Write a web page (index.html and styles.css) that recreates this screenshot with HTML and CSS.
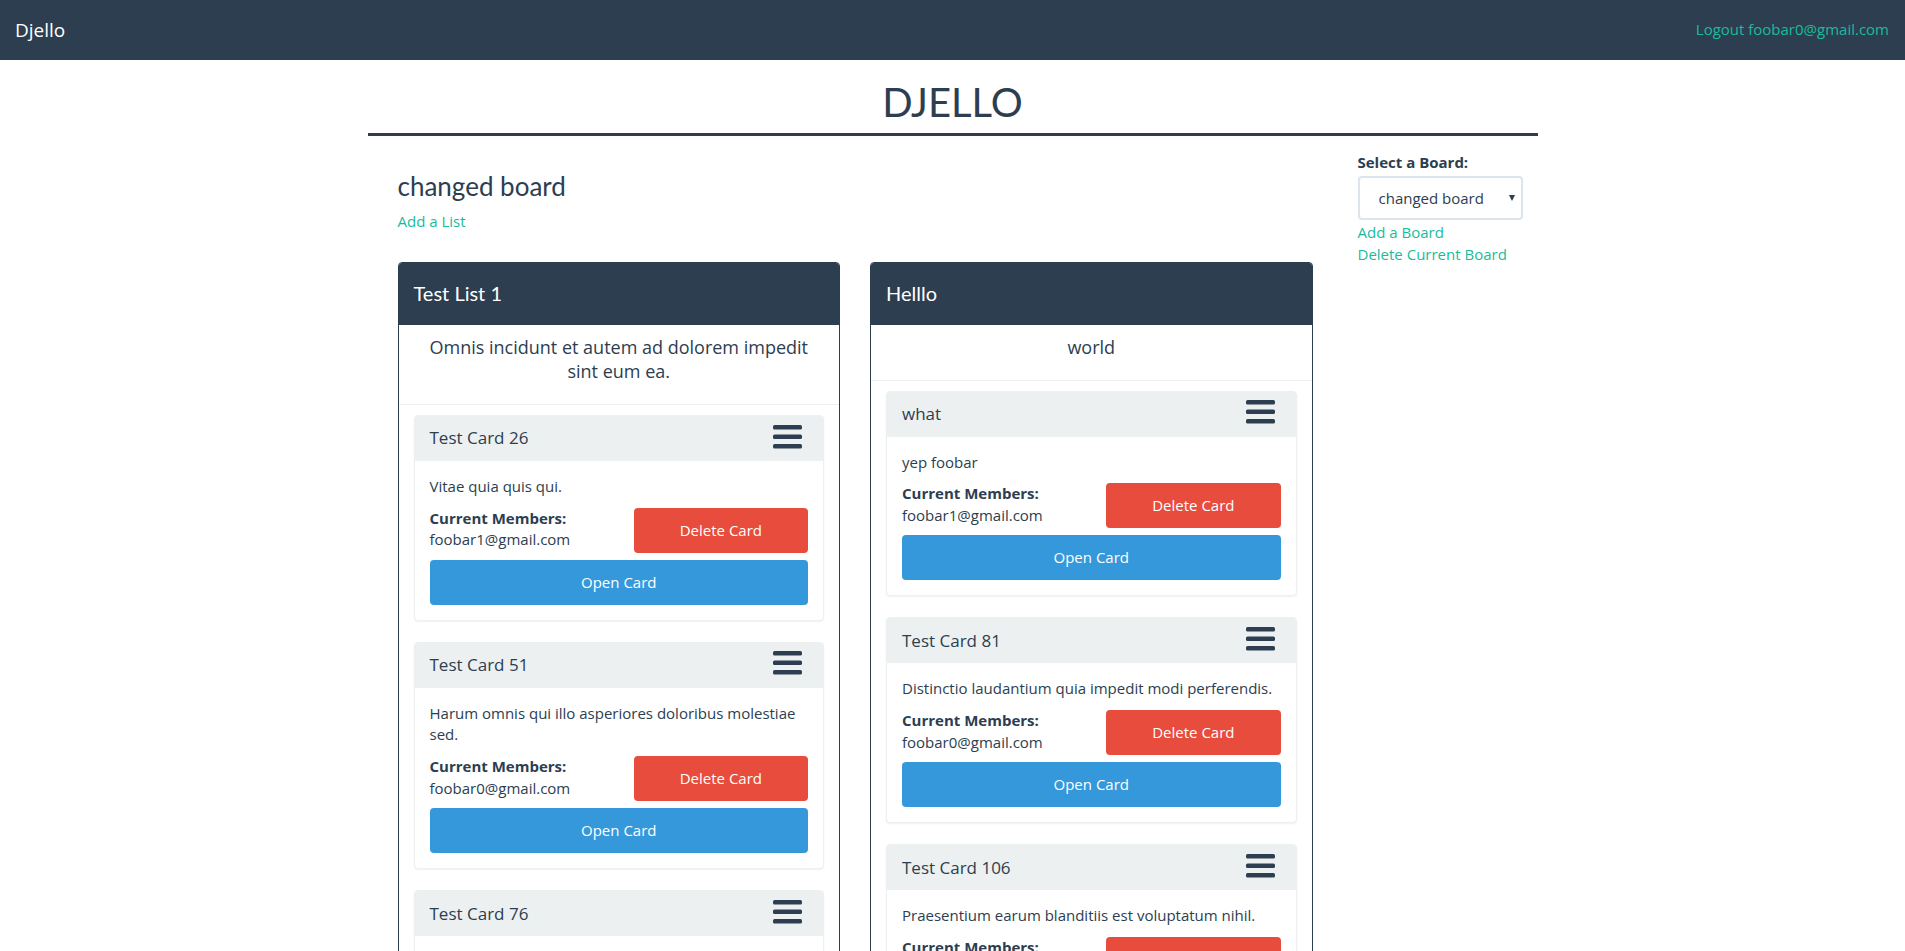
FILE: index.html
```html
<!DOCTYPE html>
<html lang="en">
<head>
<meta charset="utf-8">
<title>Djello</title>
<link rel="stylesheet" href="styles.css">
</head>
<body>
<nav class="navbar">
  <a class="brand" href="#">Djello</a>
  <a class="logout" href="#">Logout foobar0@gmail.com</a>
</nav>

<div class="container">
  <h1 class="site-title">DJELLO</h1>
  <div class="layout">
    <main class="board">
      <h3 class="board-title">changed board</h3>
      <p class="board-actions"><a href="#">Add a List</a></p>

      <div class="lists">
        <section class="list">
          <header class="list-head"><h4>Test List 1</h4></header>
          <div class="list-desc"><p>Omnis incidunt et autem ad dolorem impedit sint eum ea.</p></div>
          <div class="list-body">
            <article class="card">
              <div class="card-head"><span class="card-title">Test Card 26</span><svg class="bars" viewBox="0 0 29 24" width="29" height="24"><rect x="0" y="0" width="29" height="4.5" rx="1.6"/><rect x="0" y="9.5" width="29" height="4.5" rx="1.6"/><rect x="0" y="19" width="29" height="4.5" rx="1.6"/></svg></div>
              <div class="card-body">
                <p>Vitae quia quis qui.</p>
                <div class="card-row">
                  <div class="members"><strong>Current Members:</strong><br>foobar1@gmail.com</div>
                  <button class="btn btn-danger">Delete Card</button>
                </div>
                <button class="btn btn-info btn-block">Open Card</button>
              </div>
            </article>
            <article class="card">
              <div class="card-head"><span class="card-title">Test Card 51</span><svg class="bars" viewBox="0 0 29 24" width="29" height="24"><rect x="0" y="0" width="29" height="4.5" rx="1.6"/><rect x="0" y="9.5" width="29" height="4.5" rx="1.6"/><rect x="0" y="19" width="29" height="4.5" rx="1.6"/></svg></div>
              <div class="card-body">
                <p>Harum omnis qui illo asperiores doloribus molestiae sed.</p>
                <div class="card-row">
                  <div class="members"><strong>Current Members:</strong><br>foobar0@gmail.com</div>
                  <button class="btn btn-danger">Delete Card</button>
                </div>
                <button class="btn btn-info btn-block">Open Card</button>
              </div>
            </article>
            <article class="card">
              <div class="card-head"><span class="card-title">Test Card 76</span><svg class="bars" viewBox="0 0 29 24" width="29" height="24"><rect x="0" y="0" width="29" height="4.5" rx="1.6"/><rect x="0" y="9.5" width="29" height="4.5" rx="1.6"/><rect x="0" y="19" width="29" height="4.5" rx="1.6"/></svg></div>
              <div class="card-body">
                <p>Quo et quia nihil voluptas.</p>
                <div class="card-row">
                  <div class="members"><strong>Current Members:</strong><br>foobar0@gmail.com</div>
                  <button class="btn btn-danger">Delete Card</button>
                </div>
                <button class="btn btn-info btn-block">Open Card</button>
              </div>
            </article>
          </div>
        </section>

        <section class="list">
          <header class="list-head"><h4>Helllo</h4></header>
          <div class="list-desc"><p>world</p></div>
          <div class="list-body">
            <article class="card">
              <div class="card-head"><span class="card-title">what</span><svg class="bars" viewBox="0 0 29 24" width="29" height="24"><rect x="0" y="0" width="29" height="4.5" rx="1.6"/><rect x="0" y="9.5" width="29" height="4.5" rx="1.6"/><rect x="0" y="19" width="29" height="4.5" rx="1.6"/></svg></div>
              <div class="card-body">
                <p>yep foobar</p>
                <div class="card-row">
                  <div class="members"><strong>Current Members:</strong><br>foobar1@gmail.com</div>
                  <button class="btn btn-danger">Delete Card</button>
                </div>
                <button class="btn btn-info btn-block">Open Card</button>
              </div>
            </article>
            <article class="card">
              <div class="card-head"><span class="card-title">Test Card 81</span><svg class="bars" viewBox="0 0 29 24" width="29" height="24"><rect x="0" y="0" width="29" height="4.5" rx="1.6"/><rect x="0" y="9.5" width="29" height="4.5" rx="1.6"/><rect x="0" y="19" width="29" height="4.5" rx="1.6"/></svg></div>
              <div class="card-body">
                <p>Distinctio laudantium quia impedit modi perferendis.</p>
                <div class="card-row">
                  <div class="members"><strong>Current Members:</strong><br>foobar0@gmail.com</div>
                  <button class="btn btn-danger">Delete Card</button>
                </div>
                <button class="btn btn-info btn-block">Open Card</button>
              </div>
            </article>
            <article class="card">
              <div class="card-head"><span class="card-title">Test Card 106</span><svg class="bars" viewBox="0 0 29 24" width="29" height="24"><rect x="0" y="0" width="29" height="4.5" rx="1.6"/><rect x="0" y="9.5" width="29" height="4.5" rx="1.6"/><rect x="0" y="19" width="29" height="4.5" rx="1.6"/></svg></div>
              <div class="card-body">
                <p>Praesentium earum blanditiis est voluptatum nihil.</p>
                <div class="card-row">
                  <div class="members"><strong>Current Members:</strong><br>foobar0@gmail.com</div>
                  <button class="btn btn-danger">Delete Card</button>
                </div>
                <button class="btn btn-info btn-block">Open Card</button>
              </div>
            </article>
          </div>
        </section>
      </div>
    </main>

    <aside class="sidebar">
      <label class="select-label" for="board-select">Select a Board:</label>
      <div class="select-wrap">
        <select id="board-select" class="board-select">
          <option>changed board</option>
        </select>
      </div>
      <a href="#">Add a Board</a>
      <a href="#">Delete Current Board</a>
    </aside>
  </div>
</div>
</body>
</html>
```

FILE: styles.css
```css
* { box-sizing: border-box; }

html, body {
  margin: 0;
  padding: 0;
}

body {
  font-family: "Open Sans", "Liberation Sans", sans-serif;
  font-size: 15px;
  line-height: 1.428571;
  color: #2c3e50;
  background: #fff;
}

a {
  color: #18bc9c;
  text-decoration: none;
}

p { margin: 0 0 10.5px; }

/* Navbar */
.navbar {
  height: 60px;
  background: #2c3e50;
  display: flex;
  align-items: center;
  justify-content: space-between;
  padding: 0 16px 0 15px;
}

.brand {
  color: #fff;
  font-size: 19px;
  line-height: 20px;
}

.logout {
  color: #18bc9c;
  font-size: 15px;
}

/* Container */
.container {
  width: 1170px;
  margin: 0 auto;
}

.site-title {
  font-family: "Lato", "Liberation Sans", sans-serif;
  font-weight: 400;
  font-size: 40px;
  line-height: 44px;
  text-align: center;
  margin: 20px 0 0;
  padding-bottom: 9px;
  border-bottom: 3px solid #2c3e50;
}

.layout {
  display: grid;
  grid-template-columns: 975px 195px;
  margin-top: 16px;
}

.board {
  padding: 0 30px;
}

.board-title {
  font-family: "Lato", "Liberation Sans", sans-serif;
  font-weight: 400;
  font-size: 26px;
  line-height: 1.1;
  margin: 20px 0 10.5px;
}

.board-actions {
  margin: 0 0 29px;
}

.lists {
  display: grid;
  grid-template-columns: 1fr 1fr;
  column-gap: 30px;
  align-items: start;
}

.list {
  border: 1px solid #2c3e50;
  border-radius: 4px;
  overflow: hidden;
}

.list-head {
  background: #2c3e50;
  color: #fff;
  height: 62px;
  display: flex;
  align-items: center;
  padding: 0 15px 2px;
}

.list-head h4 {
  margin: 0;
  font-family: "Lato", "Liberation Sans", sans-serif;
  font-weight: 400;
  font-size: 20px;
  line-height: 1.1;
}

.list-desc {
  padding: 10px 15px;
  border-bottom: 1px solid #ecf0f1;
  text-align: center;
}

.list-desc p {
  font-size: 18px;
  line-height: 24.5px;
}

.list-body {
  padding: 10px 15px 0;
}

/* Cards */
.card {
  border: 1px solid #ecf0f1;
  border-radius: 4px;
  box-shadow: 0 1px 2px rgba(0, 0, 0, 0.06);
  margin-bottom: 21px;
  background: #fff;
  overflow: hidden;
}

.card-head {
  background: #ecf0f1;
  height: 45px;
  display: flex;
  align-items: center;
  justify-content: space-between;
  padding: 0 21px 0 15px;
}

.card-title {
  font-size: 17px;
}

.bars {
  fill: #2c3e50;
  margin-bottom: 4px;
}

.card-body {
  padding: 15px;
}

.card-row {
  display: grid;
  grid-template-columns: 1fr 1fr;
  column-gap: 30px;
  align-items: start;
  margin-bottom: 7px;
}

.members strong {
  font-weight: 700;
}

.btn {
  display: block;
  font-family: "Open Sans", "Liberation Sans", sans-serif;
  font-size: 15px;
  line-height: 21px;
  height: 45px;
  padding: 11px 15px;
  color: #fff;
  border: 0;
  border-radius: 4px;
  text-align: center;
  cursor: pointer;
}

.btn-danger { background: #e74c3c; }
.btn-info { background: #3498db; }
.btn-block { width: 100%; }

/* Sidebar */
.sidebar {
  padding: 0 15px;
  display: flex;
  flex-direction: column;
}

.select-label {
  font-weight: 700;
  margin-bottom: 3px;
}

.select-wrap {
  position: relative;
  margin-bottom: 2px;
}

.select-wrap::after {
  content: "";
  position: absolute;
  right: 8px;
  top: 19px;
  border-left: 3.5px solid transparent;
  border-right: 3.5px solid transparent;
  border-top: 6px solid #2c3e50;
}

.board-select {
  -webkit-appearance: none;
  appearance: none;
  width: 165px;
  height: 44px;
  border: 2px solid #dce4ec;
  border-radius: 4px;
  background: #fff;
  color: #2c3e50;
  font-family: "Open Sans", "Liberation Sans", sans-serif;
  font-size: 15px;
  padding: 0 20px 0 19px;
}
```
